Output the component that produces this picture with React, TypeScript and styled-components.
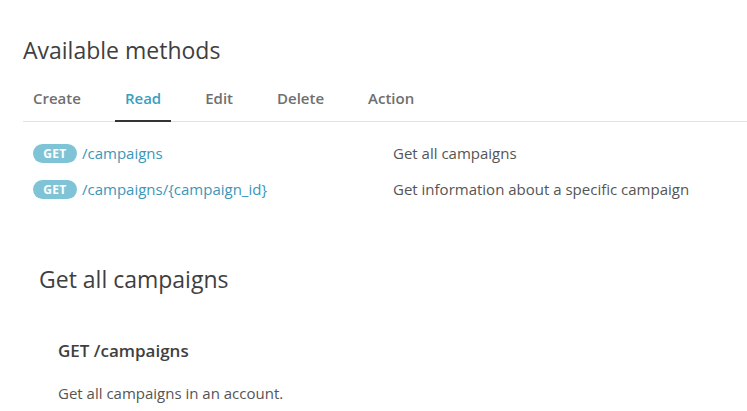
import React from 'react';
import styled, { createGlobalStyle } from 'styled-components';

const GlobalStyle = createGlobalStyle`
  html, body {
    margin: 0;
    padding: 0;
    background: #ffffff;
  }
  body {
    font-family: 'Open Sans', 'Noto Sans', sans-serif;
    color: #444444;
  }
`;

const Page = styled.div`
  width: 747px;
  height: 411px;
  overflow: hidden;
  padding: 34px 0 0 23px;
  box-sizing: border-box;
`;

const Title = styled.h2`
  margin: 0;
  font-size: 23px;
  line-height: 32px;
  font-weight: 400;
  color: #3f3f3f;
`;

const TabList = styled.div`
  display: flex;
  gap: 24px;
  margin-top: 20px;
  border-bottom: 1px solid #e2e2e2;
`;

const Tab = styled.div<{ $active?: boolean }>`
  padding: 0 10px 10px;
  font-size: 15px;
  line-height: 24px;
  font-weight: 600;
  color: ${(p) => (p.$active ? '#3a9fbf' : '#6f6f6f')};
  border-bottom: 2px solid ${(p) => (p.$active ? '#333333' : 'transparent')};
  margin-bottom: -1px;
`;

const MethodList = styled.div`
  display: flex;
  flex-direction: column;
  gap: 15px;
  margin-top: 21px;
  padding-left: 10px;
`;

const MethodRow = styled.div`
  display: grid;
  grid-template-columns: 360px 1fr;
  align-items: center;
  font-size: 15px;
  line-height: 21px;
`;

const Endpoint = styled.div`
  display: flex;
  align-items: center;
  gap: 5px;
`;

const Badge = styled.span`
  display: inline-flex;
  align-items: center;
  justify-content: center;
  width: 44px;
  height: 19px;
  border-radius: 10px;
  background: #7fc4d6;
  color: #ffffff;
  font-size: 12px;
  font-weight: 700;
  letter-spacing: 0.3px;
`;

const PathLink = styled.a`
  color: #3a97b8;
  text-decoration: none;
`;

const Description = styled.div`
  color: #555555;
`;

const Section = styled.div`
  margin-top: 64px;
  padding-left: 16px;
`;

const SectionTitle = styled.h3`
  margin: 0;
  font-size: 23px;
  line-height: 30px;
  font-weight: 400;
  color: #3f3f3f;
`;

const Operation = styled.div`
  padding-left: 19px;
  margin-top: 46px;
`;

const OperationTitle = styled.h4`
  margin: 0;
  font-size: 17px;
  line-height: 22px;
  font-weight: 600;
  color: #3f3f3f;
`;

const OperationText = styled.p`
  margin: 20px 0 0;
  font-size: 15px;
  line-height: 22px;
  color: #555555;
`;

const tabs = ['Create', 'Read', 'Edit', 'Delete', 'Action'];

const methods = [
  { path: '/campaigns', desc: 'Get all campaigns' },
  { path: '/campaigns/{campaign_id}', desc: 'Get information about a specific campaign' },
];

const App = () => {
  return (
    <>
      <GlobalStyle />
      <Page>
        <Title>Available methods</Title>
        <TabList>
          {tabs.map((t) => (
            <Tab key={t} $active={t === 'Read'}>
              {t}
            </Tab>
          ))}
        </TabList>
        <MethodList>
          {methods.map((m) => (
            <MethodRow key={m.path}>
              <Endpoint>
                <Badge>GET</Badge>
                <PathLink href="#">{m.path}</PathLink>
              </Endpoint>
              <Description>{m.desc}</Description>
            </MethodRow>
          ))}
        </MethodList>
        <Section>
          <SectionTitle>Get all campaigns</SectionTitle>
          <Operation>
            <OperationTitle>GET /campaigns</OperationTitle>
            <OperationText>Get all campaigns in an account.</OperationText>
          </Operation>
        </Section>
      </Page>
    </>
  );
};

export default App;
